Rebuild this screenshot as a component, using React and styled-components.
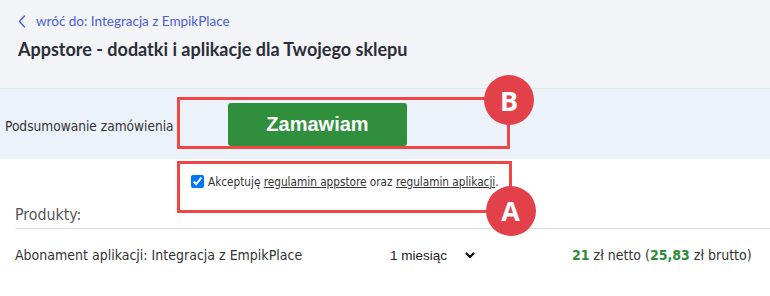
import React from 'react'
import styled, { createGlobalStyle } from 'styled-components'

const GlobalStyle = createGlobalStyle`
  html, body {
    margin: 0;
    padding: 0;
    background: #fff;
  }
  body {
    width: 770px;
    height: 296px;
    overflow: hidden;
    font-family: "Liberation Sans", Arial, sans-serif;
  }
`

function ChevronLeft() {
  return (
    <svg width="8" height="13" viewBox="0 0 8 13" fill="none">
      <path d="M6.5 1 L1.5 6.5 L6.5 12" stroke="#4a63d8" strokeWidth="1.5" strokeLinecap="round" strokeLinejoin="round" />
    </svg>
  )
}

function ChevronDown() {
  return (
    <svg width="10" height="7" viewBox="0 0 10 7" fill="none">
      <path d="M1.5 1.5 L5 5 L8.5 1.5" stroke="#111" strokeWidth="2.2" strokeLinecap="round" strokeLinejoin="round" />
    </svg>
  )
}

function App() {
  return (
    <Page>
      <GlobalStyle />
      <Header>
        <BackLink href="#">
          <ChevronLeft />
          <span>wróć do: Integracja z EmpikPlace</span>
        </BackLink>
        <Title>Appstore - dodatki i aplikacje dla Twojego sklepu</Title>
      </Header>

      <SummaryBand>
        <SummaryLabel>Podsumowanie zamówienia</SummaryLabel>
        <Frame>
          <OrderButton>Zamawiam</OrderButton>
          <Badge $top={-25} $right={-27}>B</Badge>
        </Frame>
      </SummaryBand>

      <TermsRow>
        <TermsLabel>
          <input type="checkbox" defaultChecked />
          <span>
            Akceptuję <TermsLink href="#">regulamin appstore</TermsLink> oraz{' '}
            <TermsLink href="#">regulamin aplikacji</TermsLink>.
          </span>
          <Highlight>
            <Badge $bottom={-26} $right={-27}>A</Badge>
          </Highlight>
        </TermsLabel>
      </TermsRow>

      <Products>
        <ProductsHeading>Produkty:</ProductsHeading>
        <ProductRow>
          <ProductName>Abonament aplikacji: Integracja z EmpikPlace</ProductName>
          <PeriodSelect>
            <span>1 miesiąc</span>
            <ChevronDown />
          </PeriodSelect>
          <Price>
            <Amount>21</Amount> zł netto (<Amount>25,83</Amount> zł brutto)
          </Price>
        </ProductRow>
      </Products>
    </Page>
  )
}

export default App

const Page = styled.div`
  width: 770px;
  height: 296px;
  background: #fff;
`

const Header = styled.header`
  height: 89px;
  box-sizing: border-box;
  background: #f3f4f8;
  border-bottom: 1px solid #e2e4ea;
  padding: 13px 18px 0;
  font-family: Lato, "Open Sans", sans-serif;
`

const BackLink = styled.a`
  display: flex;
  align-items: center;
  gap: 10px;
  color: #4a5fd4;
  font-size: 13.5px;
  text-decoration: none;
  height: 16px;
`

const Title = styled.h1`
  margin: 9px 0 0;
  font-size: 18px;
  font-weight: 700;
  color: #2b2e38;
`

const SummaryBand = styled.section`
  height: 70px;
  box-sizing: border-box;
  background: #ecf2fa;
  display: grid;
  grid-template-columns: 177px 333px;
  align-items: center;
  padding: 8px 0 10px;
`

const SummaryLabel = styled.span`
  padding-left: 5px;
  padding-top: 5px;
  font-family: "DejaVu Sans Condensed", "DejaVu Sans", sans-serif;
  font-size: 13.6px;
  color: #333;
  white-space: nowrap;
`

const Frame = styled.div`
  position: relative;
  height: 52px;
  box-sizing: border-box;
  border: 3px solid #f24545;
  padding: 3px 0 0 48px;
`

const OrderButton = styled.button`
  width: 179px;
  height: 43px;
  border: 0;
  border-radius: 3px;
  background: #2f8f3c;
  color: #fff;
  font-family: "Liberation Sans", Arial, sans-serif;
  font-weight: 700;
  font-size: 20px;
  cursor: pointer;
`

const Badge = styled.span`
  position: absolute;
  ${(p) => (p.$top !== undefined ? `top: ${p.$top}px;` : '')}
  ${(p) => (p.$bottom !== undefined ? `bottom: ${p.$bottom}px;` : '')}
  right: ${(p) => p.$right}px;
  width: 50px;
  height: 50px;
  border-radius: 50%;
  background: #e3414a;
  color: #fff;
  font-family: "Open Sans", "Liberation Sans", sans-serif;
  font-weight: 700;
  font-size: 27px;
  display: flex;
  align-items: center;
  justify-content: center;
  z-index: 2;
`

const TermsRow = styled.div`
  height: 46px;
  padding: 15px 0 0 191px;
  box-sizing: border-box;
`

const TermsLabel = styled.label`
  position: relative;
  display: inline-flex;
  align-items: center;
  gap: 4px;
  font-family: "DejaVu Sans Condensed", "DejaVu Sans", sans-serif;
  font-size: 11.7px;
  color: #333;

  input {
    margin: 0;
    width: 13px;
    height: 13px;
  }
`

const TermsLink = styled.a`
  color: #333;
  text-decoration: underline;
`

const Highlight = styled.span`
  position: absolute;
  left: -14px;
  right: -13px;
  top: -14px;
  bottom: -24px;
  border: 3px solid #f24545;
  pointer-events: none;
`

const Products = styled.section`
  padding: 0 0 0 15px;
`

const ProductsHeading = styled.h3`
  margin: 0;
  padding-bottom: 4px;
  border-bottom: 1px solid #dcdcdc;
  font-family: "DejaVu Sans Condensed", "DejaVu Sans", sans-serif;
  font-weight: 400;
  font-size: 15.8px;
  color: #555;
`

const ProductRow = styled.div`
  display: grid;
  grid-template-columns: 375px 182px auto;
  align-items: center;
  height: 52px;
  font-family: "DejaVu Sans Condensed", "DejaVu Sans", sans-serif;
  font-size: 14px;
  color: #333;
`

const ProductName = styled.span``

const PeriodSelect = styled.span`
  display: inline-flex;
  align-items: center;
  gap: 18px;
  font-family: "Liberation Sans", Arial, sans-serif;
  font-size: 13.5px;
  color: #222;
`

const Price = styled.span``

const Amount = styled.b`
  color: #2e8b3a;
`
